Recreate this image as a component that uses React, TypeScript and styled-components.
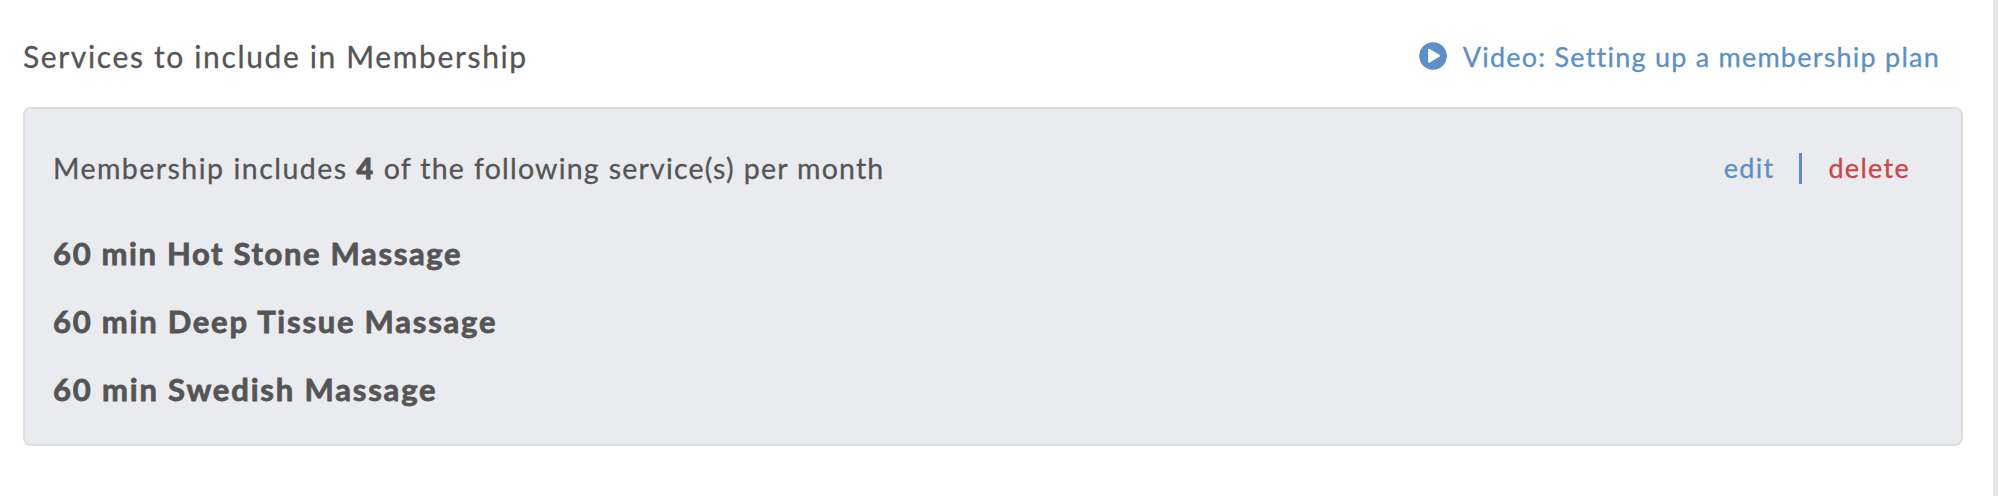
import React from "react";
import styled, { createGlobalStyle } from "styled-components";

const GlobalStyle = createGlobalStyle`
  * { box-sizing: border-box; }
  body {
    margin: 0;
    background: #fff;
    color: #555;
    font-family: Lato, "Liberation Sans", sans-serif;
    -webkit-text-stroke: 0.3px currentColor;
  }
`;

const Page = styled.main`
  height: 496px;
  padding: 0 30px 0 23px;
  border-right: 5px solid #e9e9e9;
  overflow: hidden;
`;

const Header = styled.header`
  display: flex;
  align-items: center;
  justify-content: space-between;
  height: 107px;
  padding: 6px 23px 0 0;
`;

const Title = styled.h2`
  margin: 0;
  padding-bottom: 1px;
  font-size: 30px;
  font-weight: 400;
  line-height: 36px;
  letter-spacing: 1.64px;
`;

const VideoLink = styled.a`
  display: flex;
  align-items: center;
  color: #5b8fc7;
  font-size: 27px;
  line-height: 34px;
  letter-spacing: 1.23px;
`;

const VideoLabel = styled.span`
  padding-top: 1px;
`;

const PlayIcon = styled.svg`
  width: 28px;
  height: 28px;
  margin: -2px 16px 0 0;
`;

const Panel = styled.section`
  height: 339px;
  padding: 41px 51px 0 28px;
  background: #eaebef;
  border: 2px solid #dcdddd;
  border-radius: 8px;
`;

const Summary = styled.div`
  display: flex;
  align-items: center;
  justify-content: space-between;
  height: 36px;
`;

const SummaryText = styled.p`
  margin: 0;
  font-size: 28.5px;
  letter-spacing: 1.45px;
  word-spacing: 0.4px;
  line-height: 36px;
`;

const SummaryTail = styled.span`
  letter-spacing: 1.2px;
`;

const Count = styled.strong`
  font-weight: 900;
  -webkit-text-stroke-width: 1px;
`;

const Actions = styled.div`
  display: flex;
  align-items: center;
`;

const Action = styled.a<{ $danger?: boolean }>`
  color: ${(p) => (p.$danger ? "#cd4449" : "#5b8fc7")};
  font-size: 27px;
  line-height: 32px;
  letter-spacing: 1.3px;
`;

const Divider = styled.span`
  width: 3px;
  height: 31px;
  margin: 0 26px 0 25px;
  background: #5b8fc7;
`;

const ServiceList = styled.ul`
  margin: 33px 0 0;
  padding: 0;
  list-style: none;
`;

const Service = styled.li<{ $tracking: number }>`
  height: 68px;
  font-size: 31px;
  font-weight: 700;
  line-height: 68px;
  letter-spacing: ${(p) => p.$tracking}px;
  -webkit-text-stroke-width: 0.8px;
`;

const services = [
  { name: "60 min Hot Stone Massage", tracking: 1.65 },
  { name: "60 min Deep Tissue Massage", tracking: 1.76 },
  { name: "60 min Swedish Massage", tracking: 1.82 },
];

export default function App() {
  return (
    <>
      <GlobalStyle />
      <Page>
        <Header>
          <Title>Services to include in Membership</Title>
          <VideoLink>
            <PlayIcon viewBox="0 0 28 28" aria-hidden="true">
              <circle cx="14" cy="14" r="13.8" fill="currentColor" />
              <path d="M10 7.6 20.2 13.7 10 19.9Z" fill="#fff" stroke="#fff" strokeWidth="1.8" strokeLinejoin="round" />
            </PlayIcon>
            <VideoLabel>Video: Setting up a membership plan</VideoLabel>
          </VideoLink>
        </Header>
        <Panel>
          <Summary>
            <SummaryText>
              Membership includes <Count>4</Count>{" "}
              <SummaryTail>of the following service(s) per month</SummaryTail>
            </SummaryText>
            <Actions>
              <Action>edit</Action>
              <Divider />
              <Action $danger>delete</Action>
            </Actions>
          </Summary>
          <ServiceList>
            {services.map((s) => (
              <Service key={s.name} $tracking={s.tracking}>{s.name}</Service>
            ))}
          </ServiceList>
        </Panel>
      </Page>
    </>
  );
}
